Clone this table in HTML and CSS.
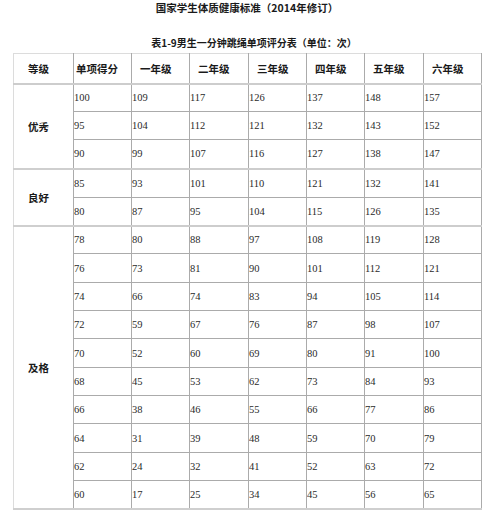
FILE: index.html
```html
<!DOCTYPE html>
<html lang="zh-CN">
<head>
<meta charset="utf-8">
<title>国家学生体质健康标准</title>
<link rel="stylesheet" href="styles.css">
</head>
<body>
<div class="page">
  <h1 class="title">国家学生体质健康标准（2014年修订）</h1>
  <h2 class="caption">表1-9男生一分钟跳绳单项评分表（单位：次）</h2>
  <table class="score">
    <colgroup>
      <col class="c-level"><col class="c-std"><col class="c-std"><col class="c-wide"><col class="c-std"><col class="c-std"><col class="c-wide"><col class="c-std">
    </colgroup>
    <thead>
      <tr>
        <th class="h-level">等级</th>
        <th class="h-score">单项得分</th>
        <th>一年级</th>
        <th>二年级</th>
        <th>三年级</th>
        <th>四年级</th>
        <th>五年级</th>
        <th>六年级</th>
      </tr>
    </thead>
    <tbody>
      <tr class="grp"><th rowspan="3" class="level">优秀</th><td>100</td><td>109</td><td>117</td><td>126</td><td>137</td><td>148</td><td>157</td></tr>
      <tr><td>95</td><td>104</td><td>112</td><td>121</td><td>132</td><td>143</td><td>152</td></tr>
      <tr class="tall"><td>90</td><td>99</td><td>107</td><td>116</td><td>127</td><td>138</td><td>147</td></tr>
      <tr class="grp tall"><th rowspan="2" class="level">良好</th><td>85</td><td>93</td><td>101</td><td>110</td><td>121</td><td>132</td><td>141</td></tr>
      <tr><td>80</td><td>87</td><td>95</td><td>104</td><td>115</td><td>126</td><td>135</td></tr>
      <tr class="grp"><th rowspan="10" class="level">及格</th><td>78</td><td>80</td><td>88</td><td>97</td><td>108</td><td>119</td><td>128</td></tr>
      <tr class="tall"><td>76</td><td>73</td><td>81</td><td>90</td><td>101</td><td>112</td><td>121</td></tr>
      <tr><td>74</td><td>66</td><td>74</td><td>83</td><td>94</td><td>105</td><td>114</td></tr>
      <tr><td>72</td><td>59</td><td>67</td><td>76</td><td>87</td><td>98</td><td>107</td></tr>
      <tr class="tall"><td>70</td><td>52</td><td>60</td><td>69</td><td>80</td><td>91</td><td>100</td></tr>
      <tr><td>68</td><td>45</td><td>53</td><td>62</td><td>73</td><td>84</td><td>93</td></tr>
      <tr><td>66</td><td>38</td><td>46</td><td>55</td><td>66</td><td>77</td><td>86</td></tr>
      <tr class="tall"><td>64</td><td>31</td><td>39</td><td>48</td><td>59</td><td>70</td><td>79</td></tr>
      <tr><td>62</td><td>24</td><td>32</td><td>41</td><td>52</td><td>63</td><td>72</td></tr>
      <tr class="last"><td>60</td><td>17</td><td>25</td><td>34</td><td>45</td><td>56</td><td>65</td></tr>
    </tbody>
  </table>
</div>
</body>
</html>
```

FILE: styles.css
```css
html, body {
  margin: 0;
  padding: 0;
  background: #ffffff;
}

.page {
  width: 500px;
  padding-left: 13px;
  box-sizing: border-box;
  font-family: "Noto Sans CJK SC", "Liberation Serif", serif;
  color: #1a1a1a;
}

.title {
  margin: 0;
  width: 468px;
  text-align: center;
  font-size: 10.5px;
  line-height: 16px;
  font-weight: 700;
}

.caption {
  margin: 19px 0 2px;
  width: 468px;
  padding-left: 14px;
  box-sizing: border-box;
  text-align: center;
  font-size: 10px;
  line-height: 16px;
  font-weight: 700;
}

.score {
  border-collapse: collapse;
  table-layout: fixed;
  width: 469px;
  border-top: 1px solid #dcdcdc;
  border-left: 1px solid #dcdcdc;
  border-right: 1px solid #a8a8a8;
}

.c-level { width: 60px; }
.c-std { width: 58px; }
.c-wide { width: 59px; }

.score th,
.score td {
  border: 1px solid #ababab;
  padding: 0;
  text-align: left;
  vertical-align: middle;
  overflow: hidden;
  white-space: nowrap;
}

.score thead tr {
  height: 30px;
}

.score thead th {
  font-size: 10.5px;
  font-weight: 700;
  padding-left: 8px;
  color: #1a1a1a;
  border-top-color: #dcdcdc;
}

.score thead .h-level {
  padding-left: 14px;
  border-left-color: #dcdcdc;
}

.score thead .h-score {
  padding-left: 2px;
}

.score tbody tr {
  height: 28px;
}

.score tbody tr.tall {
  height: 29px;
}

.score tbody tr.grp > th,
.score tbody tr.grp > td {
  border-top: 2px solid #cdcdcd;
}

.score tbody tr.last > td {
  border-bottom: 2px solid #cfcfcf;
}

.score .level {
  font-size: 10.5px;
  font-weight: 700;
  padding-left: 14px;
  border-left-color: #dcdcdc;
  border-bottom: 2px solid #cfcfcf;
}

.score td {
  font-family: "Liberation Serif", serif;
  font-size: 10.5px;
  color: #2a2a2a;
  padding-left: 0;
}
```
